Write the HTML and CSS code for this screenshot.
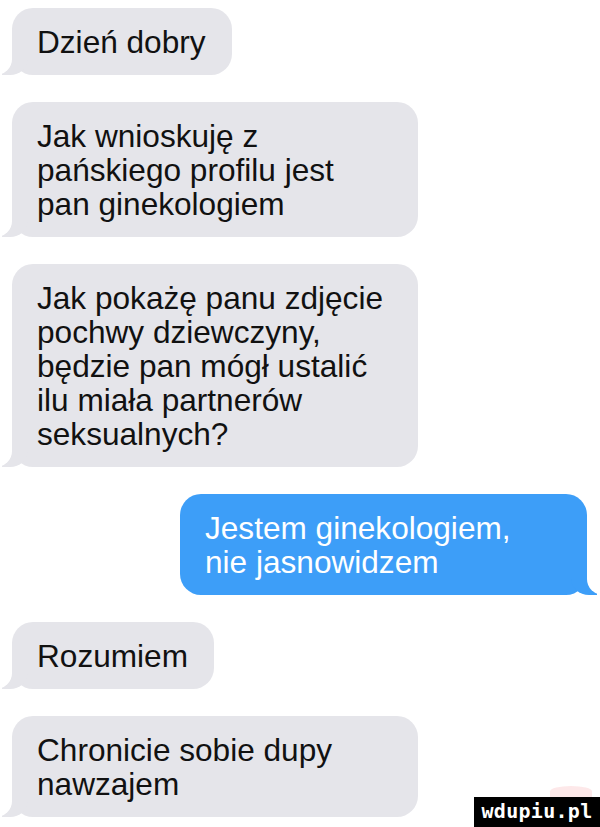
FILE: index.html
```html
<!DOCTYPE html>
<html>
	<head>
		<meta charset="UTF-8">
		<title>Rozmowa</title>
		<link rel="stylesheet" href="styles.css">
	</head>
	<body>
		<div id="chat">
			<div class="msg in">Dzień dobry</div>
			<div class="msg in wide">Jak wnioskuję z<br>pańskiego profilu jest<br>pan ginekologiem</div>
			<div class="msg in wide">Jak pokażę panu zdjęcie<br>pochwy dziewczyny,<br>będzie pan mógł ustalić<br>ilu miała partnerów<br>seksualnych?</div>
			<div class="msg out wide">Jestem ginekologiem,<br>nie jasnowidzem</div>
			<div class="msg in">Rozumiem</div>
			<div class="msg in wide">Chronicie sobie dupy<br>nawzajem</div>
		</div>
		<div id="znak"><span class="kwiat"></span>wdupiu.pl</div>
	</body>
</html>
```

FILE: styles.css
```css
*{
	margin:0;
	padding:0;
}
html,body{
	background:#fff;
}
body{
	width:600px;
	height:827px;
	overflow:hidden;
	position:relative;
	font-family:"Liberation Sans", Arial, sans-serif;
}
div#chat{
	display:flex;
	flex-direction:column;
	align-items:flex-start;
	gap:27px;
	padding:8px 13px 0 12px;
}
div.msg{
	position:relative;
	font-size:31.6px;
	line-height:34px;
	padding:17px 26px 16px 25px;
	border-radius:21px;
	color:#111;
	background:#e5e5ea;
}
div.msg.wide{
	width:406px;
	box-sizing:border-box;
}
div.msg.out{
	align-self:flex-end;
	color:#fff;
	background:#3d9ef8;
	width:407px;
}
/* ogonki dymkow */
div.msg::before,
div.msg::after{
	content:"";
	position:absolute;
	bottom:0;
	height:26px;
}
div.msg.in::before{
	left:-10px;
	width:26px;
	background:#e5e5ea;
	border-bottom-right-radius:18px 16px;
}
div.msg.in::after{
	left:-30px;
	width:30px;
	background:#fff;
	border-bottom-right-radius:16px 16px;
}
div.msg.out::before{
	right:-10px;
	width:26px;
	background:#3d9ef8;
	border-bottom-left-radius:18px 16px;
}
div.msg.out::after{
	right:-30px;
	width:30px;
	background:#fff;
	border-bottom-left-radius:16px 16px;
}
div#znak{
	position:absolute;
	right:0;
	bottom:0;
	width:126px;
	height:30px;
	background:#000;
	color:#fff;
	font-family:"DejaVu Sans Mono", monospace;
	font-weight:bold;
	font-size:20px;
	line-height:29px;
	letter-spacing:0.3px;
	text-align:center;
}
div#znak span.kwiat{
	position:absolute;
	right:8px;
	top:-11px;
	width:42px;
	height:11px;
	background:#fbd9db;
	border-radius:50% 50% 0 0;
	opacity:0.6;
}
```
